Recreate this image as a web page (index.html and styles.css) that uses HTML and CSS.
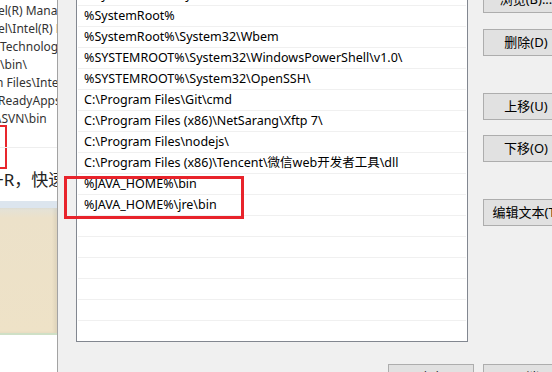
FILE: index.html
```html
<!DOCTYPE html>
<html lang="zh-CN">
<head>
    <meta charset="UTF-8">
    <title>编辑环境变量</title>
    <link rel="stylesheet" href="styles.css">
</head>
<body>
    <div class="page">
        <div class="page-lines">
            <div class="line shift-a">el(R) Management Engine</div>
            <div class="line shift-b">el\Intel(R) Management</div>
            <div class="line shift-c"> Technologies\</div>
            <div class="line shift-d">i\bin\</div>
            <div class="line shift-e">n Files\Intel\WiFi</div>
            <div class="line shift-f">ReadyApps</div>
            <div class="line shift-g">\SVN\bin</div>
        </div>
        <div class="page-mark"></div>
        <div class="page-rule"></div>
        <div class="page-text">+R，快速</div>
        <div class="page-tab"></div>
        <div class="page-panel"></div>
    </div>

    <div class="dialog">
        <div class="main">
            <div class="list-wrap">
                <div class="listbox">
                    <div class="row">%SystemRoot%\system32</div>
                    <div class="row">%SystemRoot%</div>
                    <div class="row">%SystemRoot%\System32\Wbem</div>
                    <div class="row">%SYSTEMROOT%\System32\WindowsPowerShell\v1.0\</div>
                    <div class="row">%SYSTEMROOT%\System32\OpenSSH\</div>
                    <div class="row">C:\Program Files\Git\cmd</div>
                    <div class="row">C:\Program Files (x86)\NetSarang\Xftp 7\</div>
                    <div class="row">C:\Program Files\nodejs\</div>
                    <div class="row">C:\Program Files (x86)\Tencent\微信web开发者工具\dll</div>
                    <div class="row">%JAVA_HOME%\bin</div>
                    <div class="row">%JAVA_HOME%\jre\bin</div>
                    <div class="row"></div>
                    <div class="row"></div>
                    <div class="row"></div>
                    <div class="row"></div>
                    <div class="row"></div>
                    <div class="row"></div>
                </div>
                <div class="highlight"></div>
            </div>
            <div class="side">
                <div class="btn b-browse">浏览(B)...</div>
                <div class="btn b-delete">删除(D)</div>
                <div class="btn b-up">上移(U)</div>
                <div class="btn b-down">下移(O)</div>
                <div class="btn b-text">编辑文本(T)</div>
            </div>
        </div>
        <div class="footer">
            <div class="btn">确定</div>
            <div class="btn">取消</div>
        </div>
    </div>
</body>
</html>
```

FILE: styles.css
```css
* {
    box-sizing: border-box;
}

html, body {
    margin: 0;
    padding: 0;
    width: 552px;
    height: 372px;
    overflow: hidden;
}

body {
    display: flex;
    font-family: "Noto Sans", "Noto Sans CJK SC", sans-serif;
    background-color: #fff;
}

/* page behind the dialog */
.page {
    width: 57px;
    flex-shrink: 0;
    overflow: hidden;
    position: relative;
    background-color: #fff;
}

.page-lines {
    padding-top: 2px;
}

.line {
    white-space: nowrap;
    font-size: 12px;
    line-height: 18px;
    color: #333;
}

.shift-a { margin-left: -2px; }
.shift-b { margin-left: -2px; }
.shift-c { margin-left: 0; }
.shift-d { margin-left: -3px; }
.shift-e { margin-left: -4px; }
.shift-f { margin-left: -2px; }
.shift-g { margin-left: -3px; }

.page-mark {
    width: 7px;
    height: 44px;
    margin-top: -3px;
    border: 2px solid #e8262d;
    border-left: none;
}

.page-rule {
    height: 1px;
    background-color: #eee;
    margin-top: -22px;
    margin-bottom: 21px;
}

.page-text {
    white-space: nowrap;
    font-size: 17px;
    line-height: 22px;
    margin-top: 7px;
    margin-left: -6px;
    color: #222;
}

.page-tab {
    height: 7px;
    margin-top: 10px;
    background-color: #dce5ee;
}

.page-panel {
    height: 127px;
    background: linear-gradient(#e3e2d8 0, #ece1c9 10px, #eee2c7 100%);
    border-bottom: 2px solid #cfe0c6;
    box-shadow: inset -3px 0 3px rgba(0, 0, 0, 0.06);
}

/* dialog */
.dialog {
    width: 523px;
    flex-shrink: 0;
    background-color: #f0f0f0;
    border-left: 1px solid #a3a3a3;
    padding-left: 18px;
    padding-right: 11px;
}

.main {
    display: flex;
    align-items: flex-start;
    margin-top: -16px;
}

.list-wrap {
    position: relative;
}

.listbox {
    width: 392px;
    height: 358px;
    overflow: hidden;
    background-color: #fff;
    border: 1px solid #828790;
    padding: 0 1px;
}

.row {
    height: 21px;
    border-bottom: 1px solid #f0f0f0;
    padding-left: 6px;
    font-size: 12.5px;
    line-height: 20px;
    color: #000;
    white-space: nowrap;
}

.highlight {
    position: absolute;
    left: -12px;
    top: 192px;
    width: 180px;
    height: 43px;
    border: 3px solid #e8232b;
}

.side {
    margin-left: 15px;
    display: flex;
    flex-direction: column;
}

.btn {
    width: 86px;
    height: 27px;
    flex-shrink: 0;
    background-color: #e1e1e1;
    border: 1px solid #adadad;
    font-size: 13px;
    line-height: 25px;
    text-align: center;
    color: #000;
    white-space: nowrap;
}

.b-browse { margin-top: 2px; }
.b-delete { margin-top: 16px; }
.b-up { margin-top: 37px; }
.b-down { margin-top: 15px; }
.b-text { margin-top: 37px; }

.footer {
    display: flex;
    justify-content: flex-end;
    gap: 9px;
    margin-top: 22px;
}
```
